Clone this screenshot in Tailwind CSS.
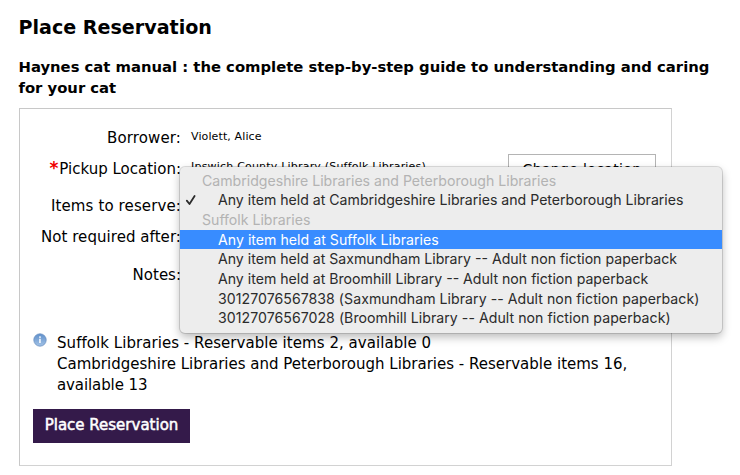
<!DOCTYPE html>
<html lang="en">
<head>
<meta charset="utf-8">
<title>Place Reservation</title>
<script src="https://cdn.jsdelivr.net/npm/@tailwindcss/browser@4"></script>
</head>
<body class="bg-white text-black font-['DejaVu_Sans',sans-serif] text-[15px] leading-[21px] overflow-hidden">
<main class="relative pl-[19px] pt-[16px] h-[475px] w-[740px]">
  <h1 class="-ml-[0.5px] text-[19.1px] leading-6 font-bold">Place Reservation</h1>
  <h2 class="mt-[16px] -ml-[0.5px] text-[14.8px] font-bold whitespace-nowrap">Haynes cat manual : the complete step-by-step guide to understanding and caring<br>for your cat</h2>

  <section class="mt-[10px] w-[653px] h-[358px] border border-[#c8c8c8] border-r-[#d2d2d2] border-b-[#d2d2d2]">
    <div class="flex flex-col pt-[19px]">
      <div class="flex h-[30px]">
        <div class="w-[161px] text-right whitespace-nowrap tracking-[0.13px]">Borrower:</div>
        <div class="ml-[10px] text-[11px] leading-[18px] tracking-[0.12px] whitespace-nowrap">Violett, Alice</div>
      </div>
      <div class="flex h-[38px]">
        <div class="w-[161px] text-right whitespace-nowrap leading-[21px]"><span class="text-[#f00000] font-bold text-[17px] leading-5 mr-px">*</span>Pickup Location:</div>
        <div class="ml-[10px] text-[11px] leading-[18px] tracking-[0.2px] whitespace-nowrap">Ipswich County Library (Suffolk Libraries)</div>
        <button class="ml-auto mr-[15px] -mt-[4px] w-[148px] h-[34px] border border-[#b4b4b4] text-[14px] tracking-[0.35px] leading-[29px] pb-[3px] whitespace-nowrap">Change location</button>
      </div>
      <div class="flex h-[31px]"><div class="w-[161px] text-right whitespace-nowrap tracking-[0.12px]">Items to reserve:</div></div>
      <div class="flex h-[38px]"><div class="w-[161px] text-right whitespace-nowrap tracking-[0.06px]">Not required after:</div></div>
      <div class="flex h-[68px]"><div class="w-[161px] text-right whitespace-nowrap">Notes:</div></div>
    </div>
    <div class="flex pl-[13px]">
      <svg class="w-[14px] h-[14px]" viewBox="0 0 14 14">
        <defs><linearGradient id="info" x1="0" y1="0" x2="0" y2="1"><stop offset="0" stop-color="#5f90cb"/><stop offset="1" stop-color="#a2c2e6"/></linearGradient></defs>
        <circle cx="7" cy="7" r="6.2" fill="url(#info)" stroke="#6e93c3" stroke-width=".8"/>
        <circle cx="7" cy="4.1" r=".9" fill="#fff"/><path d="M6.2 5.8h1.5v4.2H6.2z" fill="#fff"/>
      </svg>
      <p class="ml-[10px] whitespace-nowrap"><span class="tracking-[0.05px]">Suffolk Libraries - Reservable items 2, available 0</span><br>Cambridgeshire Libraries and Peterborough Libraries - Reservable items 16,<br><span class="tracking-[-0.1px]">available 13</span></p>
    </div>
    <button class="block mt-[13px] ml-[13px] w-[157px] h-[34px] bg-[#341a4a] text-white leading-[33px] pb-px whitespace-nowrap [-webkit-text-stroke:0.5px_white]">Place Reservation</button>
  </section>

  <div class="absolute left-[180px] top-[167px] w-[542px] h-[166px] rounded-[5px] bg-[#ededed] pt-[3.5px] font-[Inter,sans-serif] text-[14.12px] leading-[19.7px] text-[#2b2b2b] whitespace-nowrap shadow-[0_0_0_1px_rgba(0,0,0,0.13),0_4px_10px_rgba(0,0,0,0.28)]">
    <div class="h-[19.7px] pl-[22px] text-[#b3b3b3]">Cambridgeshire Libraries and Peterborough Libraries</div>
    <div class="h-[19.7px] flex items-center pl-[5px]">
      <svg class="w-[12px] h-[12px]" viewBox="0 0 12 12" fill="none" stroke="#2b2b2b" stroke-width="1.8" stroke-linecap="round" stroke-linejoin="round"><path d="M1.8 6.6 4.5 10 9.6 2"/></svg>
      <span class="ml-[21px]">Any item held at Cambridgeshire Libraries and Peterborough Libraries</span>
    </div>
    <div class="h-[19.7px] pl-[22px] text-[#b3b3b3]">Suffolk Libraries</div>
    <div class="h-[19.7px] pl-[38px] bg-[#388cff] text-white tracking-[0.03px]">Any item held at Suffolk Libraries</div>
    <div class="h-[19.7px] pl-[38px]">Any item held at Saxmundham Library -- Adult non fiction paperback</div>
    <div class="h-[19.7px] pl-[38px]">Any item held at Broomhill Library -- Adult non fiction paperback</div>
    <div class="h-[19.7px] pl-[38px] tracking-[0.05px]">30127076567838 (Saxmundham Library -- Adult non fiction paperback)</div>
    <div class="h-[19.7px] pl-[38px] tracking-[0.05px]">30127076567028 (Broomhill Library -- Adult non fiction paperback)</div>
  </div>
</main>
</body>
</html>
